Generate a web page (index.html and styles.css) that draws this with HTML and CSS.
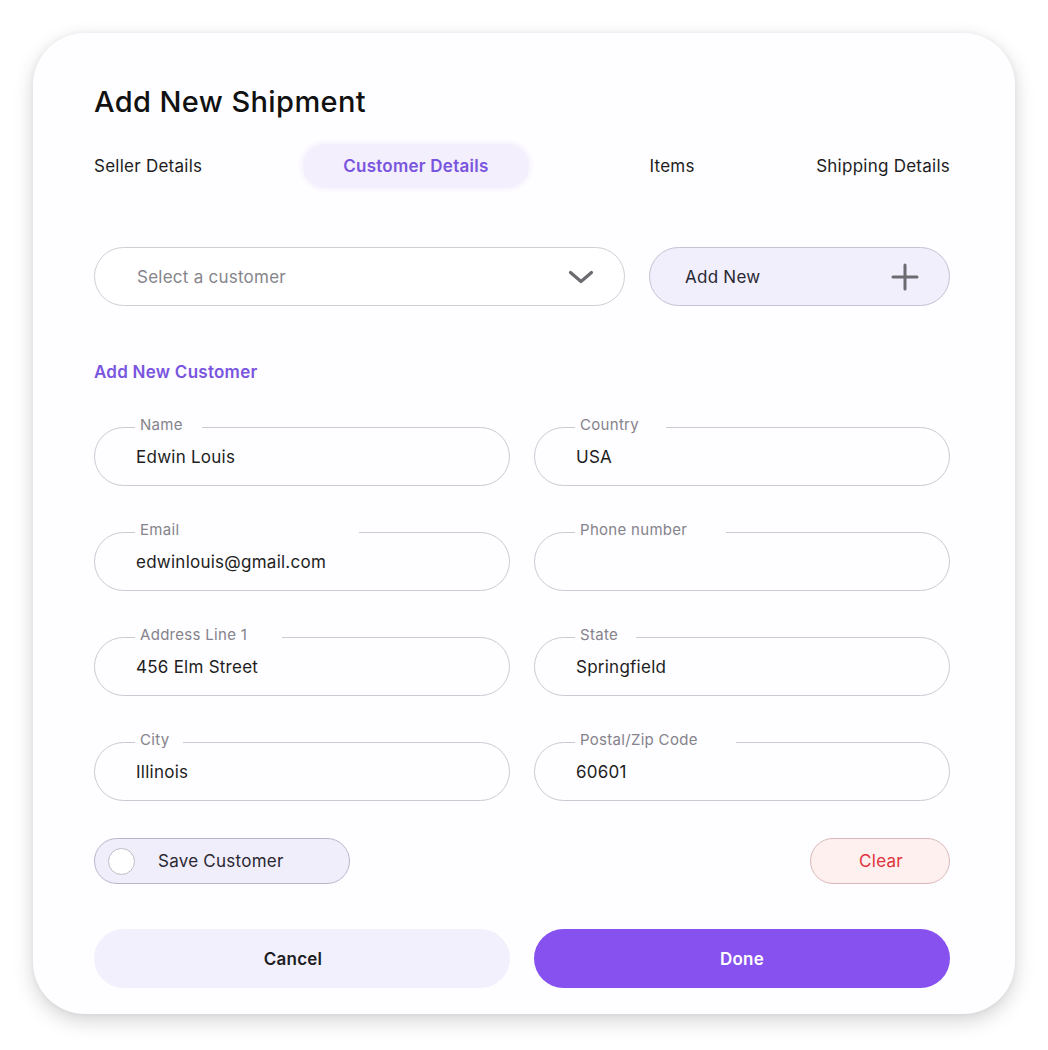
FILE: index.html
```html
<!DOCTYPE html>
<html lang="en">
<head>
<meta charset="utf-8">
<title>Add New Shipment</title>
<link rel="stylesheet" href="styles.css">
</head>
<body>
<div class="card">
  <h1 class="title">Add New Shipment</h1>
  <nav class="tabs">
    <span class="tab tab-seller">Seller Details</span>
    <span class="tab tab-active">Customer Details</span>
    <span class="tab tab-items">Items</span>
    <span class="tab tab-shipping">Shipping Details</span>
  </nav>

  <div class="select-row">
    <div class="select">
      <span class="placeholder">Select a customer</span>
      <svg class="chev" width="26" height="14" viewBox="0 0 26 14"><path d="M2.5 2.5 L13 11.5 L23.5 2.5" fill="none" stroke="#6b6b70" stroke-width="3.2" stroke-linecap="round" stroke-linejoin="round"/></svg>
    </div>
    <button class="add-new">
      <span>Add New</span>
      <svg width="28" height="28" viewBox="0 0 28 28"><path d="M14 2 V26 M2 14 H26" fill="none" stroke="#6b6b70" stroke-width="3" stroke-linecap="round"/></svg>
    </button>
  </div>

  <h2 class="section">Add New Customer</h2>

  <div class="grid">
    <fieldset class="field"><legend class="pr-19">Name</legend><span class="value">Edwin Louis</span></fieldset>
    <fieldset class="field"><legend class="pr-27">Country</legend><span class="value">USA</span></fieldset>
    <fieldset class="field"><legend class="pr-180">Email</legend><span class="value">edwinlouis@gmail.com</span></fieldset>
    <fieldset class="field"><legend class="pr-39">Phone number</legend><span class="value"></span></fieldset>
    <fieldset class="field"><legend class="pr-35">Address Line 1</legend><span class="value">456 Elm Street</span></fieldset>
    <fieldset class="field"><legend class="pr-18">State</legend><span class="value">Springfield</span></fieldset>
    <fieldset class="field"><legend class="pr-14">City</legend><span class="value">Illinois</span></fieldset>
    <fieldset class="field"><legend class="pr-38">Postal/Zip Code</legend><span class="value">60601</span></fieldset>
  </div>

  <div class="options">
    <label class="save">
      <span class="knob"></span>
      <span>Save Customer</span>
    </label>
    <button class="clear">Clear</button>
  </div>

  <div class="actions">
    <button class="cancel">Cancel</button>
    <button class="done">Done</button>
  </div>
</div>
</body>
</html>
```

FILE: styles.css
```css
* { box-sizing: border-box; }
html, body { margin: 0; padding: 0; background: #ffffff; }
body {
  font-family: Inter, "Noto Sans", "Liberation Sans", sans-serif;
  color: #1d1d22;
  letter-spacing: 0.25px;
  padding: 33px 33px 36px 33px;
}
.card {
  width: 982px;
  height: 981px;
  background: #fefdff;
  border-radius: 52px;
  box-shadow: 0 7px 20px rgba(0, 0, 0, 0.17), 0 0 6px rgba(0, 0, 0, 0.05);
  padding: 52px 65px 27px 61px;
}
.title {
  margin: 0;
  font-size: 29px;
  line-height: 34px;
  font-weight: 500;
  letter-spacing: 0.4px;
  color: #111;
}
.tabs {
  display: flex;
  align-items: center;
  margin-top: 25px;
  height: 44px;
  font-size: 17px;
}
.tab { color: #1d1d22; white-space: nowrap; }
.tab-active {
  margin-left: 101px;
  height: 44px;
  padding: 0 40px;
  display: flex;
  align-items: center;
  border-radius: 22px;
  background: #f3effd;
  box-shadow: 0 0 4px 2px #f6f2fe;
  color: #7a55de;
  font-weight: 600;
}
.tab-items { margin-left: 121px; }
.tab-shipping { margin-left: auto; }

.select-row {
  display: flex;
  gap: 24px;
  margin-top: 59px;
}
.select {
  flex: 0 0 531px;
  height: 59px;
  border: 1px solid #cfcfd3;
  border-radius: 30px;
  background: #fff;
  display: flex;
  align-items: center;
  justify-content: space-between;
  padding: 0 30px 0 42px;
}
.placeholder { font-size: 17px; color: #85858b; }
.add-new {
  flex: 1;
  height: 59px;
  border: 1px solid #c5c1d3;
  border-radius: 30px;
  background: #f1effc;
  display: flex;
  align-items: center;
  justify-content: space-between;
  padding: 0 30px 0 35px;
  font-family: inherit;
  font-size: 17px;
  letter-spacing: 0.25px;
  color: #2a2833;
}
.section {
  margin: 56px 0 0 0;
  font-size: 17px;
  line-height: 20px;
  font-weight: 600;
  color: #7a55de;
}
.grid {
  display: grid;
  grid-template-columns: 1fr 1fr;
  column-gap: 24px;
  row-gap: 35px;
  margin-top: 34px;
}
.field {
  margin: 0;
  padding: 0 0 0 40px;
  height: 70px;
  border: 1px solid #cdc9d4;
  border-radius: 30px;
  display: flex;
  align-items: center;
  min-width: 0;
}
.field legend {
  font-size: 15px;
  line-height: 18px;
  letter-spacing: 0.3px;
  color: #85838b;
  padding: 0 19px 4px 5px;
  margin-left: 0;
}
.field legend.pr-14 { padding-right: 14px; }
.field legend.pr-18 { padding-right: 18px; }
.field legend.pr-19 { padding-right: 19px; }
.field legend.pr-27 { padding-right: 27px; }
.field legend.pr-35 { padding-right: 35px; }
.field legend.pr-38 { padding-right: 38px; }
.field legend.pr-39 { padding-right: 39px; }
.field legend.pr-180 { padding-right: 180px; }
.value {
  font-size: 17px;
  color: #1d1d22;
  line-height: 20px;
  margin-top: -9px;
  margin-left: 1px;
}
.options {
  display: flex;
  justify-content: space-between;
  align-items: center;
  margin-top: 37px;
}
.save {
  width: 256px;
  height: 46px;
  border: 1px solid #bab6cb;
  border-radius: 23px;
  background: #f0eefb;
  display: flex;
  align-items: center;
  padding-left: 13px;
  gap: 23px;
  font-size: 17px;
  color: #2a2833;
}
.knob {
  width: 27px;
  height: 27px;
  border-radius: 50%;
  background: #fff;
  border: 1px solid #bdbdc4;
}
.clear {
  width: 140px;
  height: 46px;
  border: 1px solid #d9b9bb;
  border-radius: 23px;
  background: #fdf0ef;
  color: #e0323c;
  font-family: inherit;
  font-size: 17px;
  letter-spacing: 0.25px;
  padding-left: 8px;
}
.actions {
  display: grid;
  grid-template-columns: 1fr 1fr;
  gap: 24px;
  margin-top: 45px;
}
.cancel, .done {
  height: 59px;
  border: none;
  border-radius: 30px;
  font-family: inherit;
  font-size: 17px;
  font-weight: 600;
  letter-spacing: 0.25px;
}
.cancel { background: #f3f0fd; color: #1d1d22; padding-right: 24px; }
.done { background: #8651ef; color: #fff; }
```
